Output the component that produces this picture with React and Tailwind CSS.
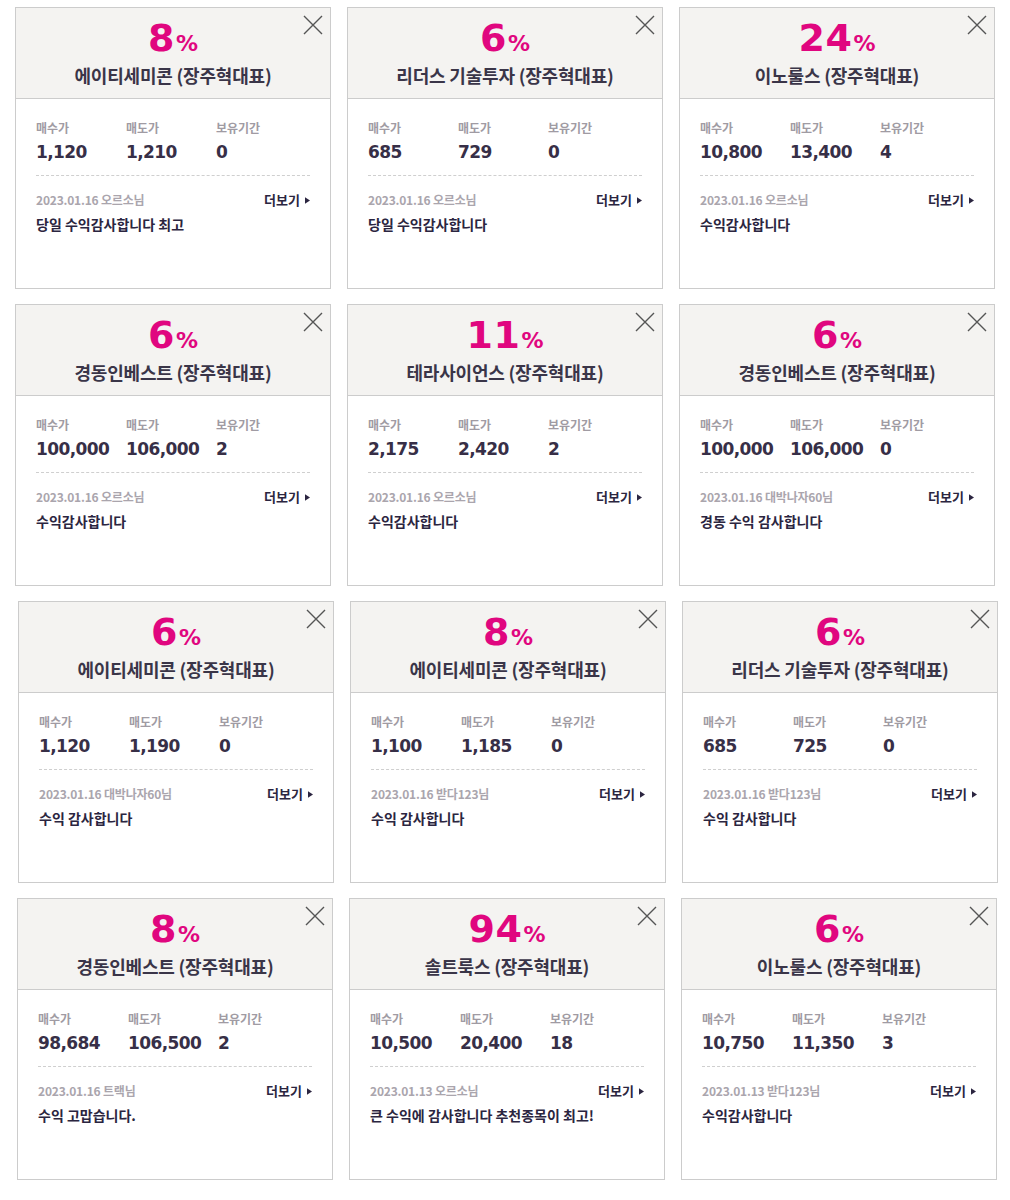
import React from 'react'

const rows = [
  {
    offset: 'pl-[15px]',
    cards: [
      { pct: '8', name: '에이티세미콘 (장주혁대표)', buy: '1,120', sell: '1,210', hold: '0', date: '2023.01.16', user: '오르소님', text: '당일 수익감사합니다 최고' },
      { pct: '6', name: '리더스 기술투자 (장주혁대표)', buy: '685', sell: '729', hold: '0', date: '2023.01.16', user: '오르소님', text: '당일 수익감사합니다' },
      { pct: '24', name: '이노룰스 (장주혁대표)', buy: '10,800', sell: '13,400', hold: '4', date: '2023.01.16', user: '오르소님', text: '수익감사합니다' },
    ],
  },
  {
    offset: 'pl-[15px]',
    cards: [
      { pct: '6', name: '경동인베스트 (장주혁대표)', buy: '100,000', sell: '106,000', hold: '2', date: '2023.01.16', user: '오르소님', text: '수익감사합니다' },
      { pct: '11', name: '테라사이언스 (장주혁대표)', buy: '2,175', sell: '2,420', hold: '2', date: '2023.01.16', user: '오르소님', text: '수익감사합니다' },
      { pct: '6', name: '경동인베스트 (장주혁대표)', buy: '100,000', sell: '106,000', hold: '0', date: '2023.01.16', user: '대박나자60님', text: '경동 수익 감사합니다' },
    ],
  },
  {
    offset: 'pl-[18px]',
    cards: [
      { pct: '6', name: '에이티세미콘 (장주혁대표)', buy: '1,120', sell: '1,190', hold: '0', date: '2023.01.16', user: '대박나자60님', text: '수익 감사합니다' },
      { pct: '8', name: '에이티세미콘 (장주혁대표)', buy: '1,100', sell: '1,185', hold: '0', date: '2023.01.16', user: '받다123님', text: '수익 감사합니다' },
      { pct: '6', name: '리더스 기술투자 (장주혁대표)', buy: '685', sell: '725', hold: '0', date: '2023.01.16', user: '받다123님', text: '수익 감사합니다' },
    ],
  },
  {
    offset: 'pl-[17px]',
    cards: [
      { pct: '8', name: '경동인베스트 (장주혁대표)', buy: '98,684', sell: '106,500', hold: '2', date: '2023.01.16', user: '트랙님', text: '수익 고맙습니다.' },
      { pct: '94', name: '솔트룩스 (장주혁대표)', buy: '10,500', sell: '20,400', hold: '18', date: '2023.01.13', user: '오르소님', text: '큰 수익에 감사합니다 추천종목이 최고!' },
      { pct: '6', name: '이노룰스 (장주혁대표)', buy: '10,750', sell: '11,350', hold: '3', date: '2023.01.13', user: '받다123님', text: '수익감사합니다' },
    ],
  },
]

const kr = { fontFamily: "'Noto Sans CJK KR', 'Noto Sans', sans-serif" }
const num = { fontFamily: "Tahoma, 'DejaVu Sans', Verdana, sans-serif" }

function Card({ c }) {
  return (
    <div className="relative w-[316px] h-[282px] border border-[#cccccc] bg-white">
      <button className="absolute top-[7px] right-[7px] w-[20px] h-[20px]">
        <svg viewBox="0 0 20 20" className="w-full h-full">
          <path d="M1 1L19 19M19 1L1 19" stroke="#555" strokeWidth="1.4" fill="none" />
        </svg>
      </button>
      <div className="h-[91px] bg-[#f4f3f1] border-b border-[#cccccc] flex flex-col items-center pt-[11px]">
        <div className="flex items-baseline text-[#e0067f] font-bold leading-none h-[38px]" style={num}>
          <span className="text-[38px] tracking-[0.5px]">{c.pct}</span>
          <span className="text-[22px] ml-[1px]">%</span>
        </div>
        <div className="mt-[6px] text-[18px] font-bold text-[#3a3548] leading-[24px] tracking-[-0.2px]" style={kr}>
          {c.name}
        </div>
      </div>
      <div className="px-[20px] pt-[20px]">
        <div className="grid grid-cols-[90px_90px_90px]">
          {[
            ['매수가', c.buy],
            ['매도가', c.sell],
            ['보유기간', c.hold],
          ].map(([l, v]) => (
            <div key={l} className="flex flex-col">
              <span className="text-[12px] font-bold text-[#a09ba3] leading-[18px]" style={kr}>{l}</span>
              <span className="mt-[3px] text-[17px] font-bold text-[#372f47] leading-[24px] tracking-[-0.6px]" style={num}>{v}</span>
            </div>
          ))}
        </div>
        <div className="mt-[11px] border-t border-dashed border-[#cfcfcf]" />
        <div className="mt-[15px] flex justify-between items-center">
          <span className="text-[12px] font-bold text-[#aaa5ad] leading-[18px] tracking-[-0.2px]" style={kr}>
            {c.date} {c.user}
          </span>
          <span className="flex items-center text-[13px] font-bold text-[#2b2540] leading-[18px]" style={kr}>
            더보기
            <svg viewBox="0 0 6 8" className="w-[5px] h-[7px] ml-[5px]">
              <path d="M0 0L6 4L0 8Z" fill="#2b2540" />
            </svg>
          </span>
        </div>
        <div className="mt-[5px] text-[14px] font-bold text-[#2b2540] leading-[20px]" style={kr}>{c.text}</div>
      </div>
    </div>
  )
}

export default function App() {
  return (
    <div className="w-[1010px] h-[1200px] bg-white pt-[7px] flex flex-col gap-[15px]">
      {rows.map((r, i) => (
        <div key={i} className={`flex gap-[16px] ${r.offset}`}>
          {r.cards.map((c, j) => (
            <Card key={j} c={c} />
          ))}
        </div>
      ))}
    </div>
  )
}
